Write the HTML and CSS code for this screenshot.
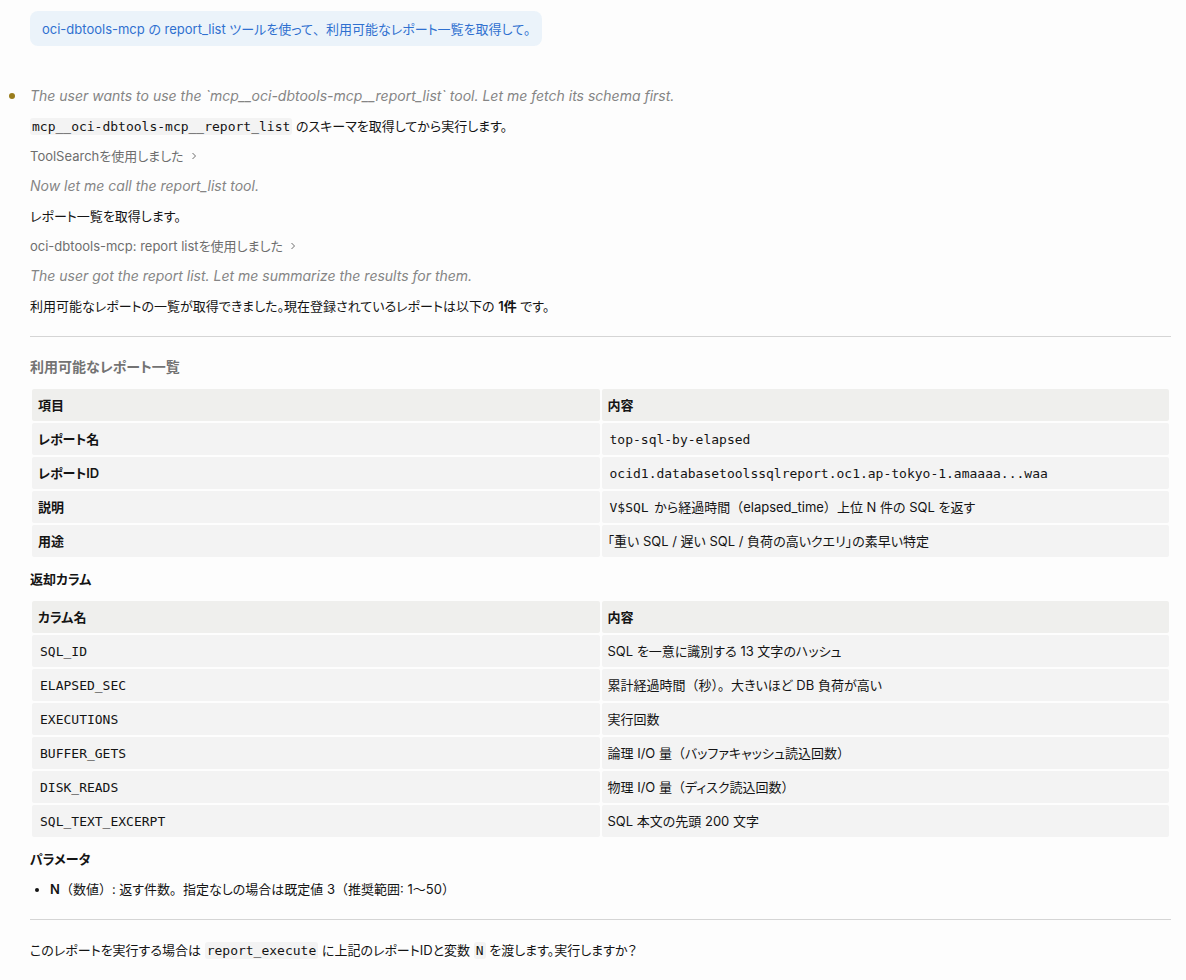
FILE: index.html
```html
<!DOCTYPE html>
<html lang="ja">
<head>
    <meta charset="UTF-8">
    <meta name="viewport" content="width=device-width, initial-scale=1.0">
    <title>oci-dbtools-mcp</title>
    <link rel="stylesheet" href="styles.css">
</head>
<body>

    <main class="chat">
        <div class="user-message">oci-dbtools-mcp の report_list ツールを使って<span class="full">、</span>利用可能なレポート一覧を取得して。</div>

        <div class="reply">
            <p class="thinking first">The user wants to use the `mcp__oci-dbtools-mcp__report_list` tool. Let me fetch its schema first.</p>
            <p><code>mcp__oci-dbtools-mcp__report_list</code> のスキーマを取得してから実行します。</p>
            <button type="button" class="tool">ToolSearchを使用しました
                <svg class="chevron" viewBox="0 0 6 8" aria-hidden="true"><path d="M1.5 1 L4.5 4 L1.5 7"/></svg>
            </button>
            <p class="thinking">Now let me call the report_list tool.</p>
            <p>レポート一覧を取得します。</p>
            <button type="button" class="tool">oci-dbtools-mcp: report listを使用しました
                <svg class="chevron" viewBox="0 0 6 8" aria-hidden="true"><path d="M1.5 1 L4.5 4 L1.5 7"/></svg>
            </button>
            <p class="thinking">The user got the report list. Let me summarize the results for them.</p>
            <p>利用可能なレポートの一覧が取得できました。現在登録されているレポートは以下の <strong>1件</strong> です。</p>

            <hr>

            <h2>利用可能なレポート一覧</h2>
            <table>
                <thead>
                    <tr><th>項目</th><th>内容</th></tr>
                </thead>
                <tbody>
                    <tr><td><strong>レポート名</strong></td><td><code>top-sql-by-elapsed</code></td></tr>
                    <tr><td><strong>レポートID</strong></td><td><code>ocid1.databasetoolssqlreport.oc1.ap-tokyo-1.amaaaa...waa</code></td></tr>
                    <tr><td><strong>説明</strong></td><td><code>V$SQL</code> から経過時間<span class="full">（</span>elapsed_time<span class="full">）</span>上位 N 件の SQL を返す</td></tr>
                    <tr><td><strong>用途</strong></td><td>「重い SQL / 遅い SQL / 負荷の高いクエリ」の素早い特定</td></tr>
                </tbody>
            </table>

            <p><strong>返却カラム</strong></p>
            <table>
                <thead>
                    <tr><th>カラム名</th><th>内容</th></tr>
                </thead>
                <tbody>
                    <tr><td><code>SQL_ID</code></td><td>SQL を一意に識別する 13 文字のハッシュ</td></tr>
                    <tr><td><code>ELAPSED_SEC</code></td><td>累計経過時間<span class="full">（秒）。</span>大きいほど DB 負荷が高い</td></tr>
                    <tr><td><code>EXECUTIONS</code></td><td>実行回数</td></tr>
                    <tr><td><code>BUFFER_GETS</code></td><td>論理 I/O 量<span class="full">（</span>バッファキャッシュ読込回数<span class="full">）</span></td></tr>
                    <tr><td><code>DISK_READS</code></td><td>物理 I/O 量<span class="full">（</span>ディスク読込回数<span class="full">）</span></td></tr>
                    <tr><td><code>SQL_TEXT_EXCERPT</code></td><td>SQL 本文の先頭 200 文字</td></tr>
                </tbody>
            </table>

            <p><strong>パラメータ</strong></p>
            <ul>
                <li><strong>N</strong><span class="full">（数値）</span>: 返す件数<span class="full">。</span>指定なしの場合は既定値 3<span class="full">（</span>推奨範囲: 1〜50<span class="full">）</span></li>
            </ul>

            <hr>

            <p>このレポートを実行する場合は <code>report_execute</code> に上記のレポートIDと変数 <code>N</code> を渡します。実行しますか？</p>
        </div>
    </main>

</body>
</html>
```
FILE: styles.css
```css
body {
    margin: 0;
    background-color: #fdfdfd;
    color: #141414;
    font-family: Inter, "Noto Sans CJK JP", sans-serif;
    font-size: 13px;
    line-height: 20px;
    font-feature-settings: "palt";
}

.chat {
    display: flex;
    flex-direction: column;
    align-items: flex-start;
    gap: 40px;
    padding: 11px 15px 20px 30px;
}

.user-message {
    padding: 8px 12px 7px;
    border-radius: 8px;
    background-color: #ebf3fa;
    color: #2f70d0;
}

.reply {
    display: flex;
    flex-direction: column;
    gap: 10px;
    width: 100%;
}

p,
h2,
ul {
    margin: 0;
}

/* full-width punctuation keeps its own spacing */
.full {
    font-feature-settings: normal;
}

.thinking {
    color: #858585;
    font-size: 14px;
    font-style: italic;
}

/* status dot in the left gutter */
.first {
    position: relative;
}

.first::before {
    content: "";
    position: absolute;
    top: 7px;
    left: -21px;
    width: 6px;
    height: 6px;
    border-radius: 50%;
    background-color: #9a7d1c;
}

.tool {
    display: flex;
    align-items: center;
    align-self: flex-start;
    gap: 7px;
    padding: 0;
    border: none;
    background: none;
    color: #6e6e6e;
    font: inherit;
    font-feature-settings: inherit;
    cursor: pointer;
}

.chevron {
    width: 6px;
    height: 8px;
    fill: none;
    stroke: #6e6e6e;
    stroke-width: 1;
}

code {
    padding: 1px 2px;
    border-radius: 3px;
    background-color: #f3f3f3;
    font-family: "DejaVu Sans Mono", monospace;
    font-size: 13px;
    line-height: 16px;
}

strong,
th {
    font-weight: 600;
}

h2 {
    color: #737373;
    font-size: 14px;
    font-weight: 600;
    line-height: 20px;
}

hr {
    width: 100%;
    height: 1px;
    margin: 10px 0;
    border: none;
    background-color: #d5d5d5;
}

table {
    width: 100%;
    table-layout: fixed;
    border-collapse: separate;
    border-spacing: 2px;
}

th,
td {
    padding: 6px;
    border-radius: 2px;
    background-color: #f3f3f3;
    text-align: left;
}

th {
    background-color: #efefed;
}

ul {
    padding-left: 20px;
}
```
